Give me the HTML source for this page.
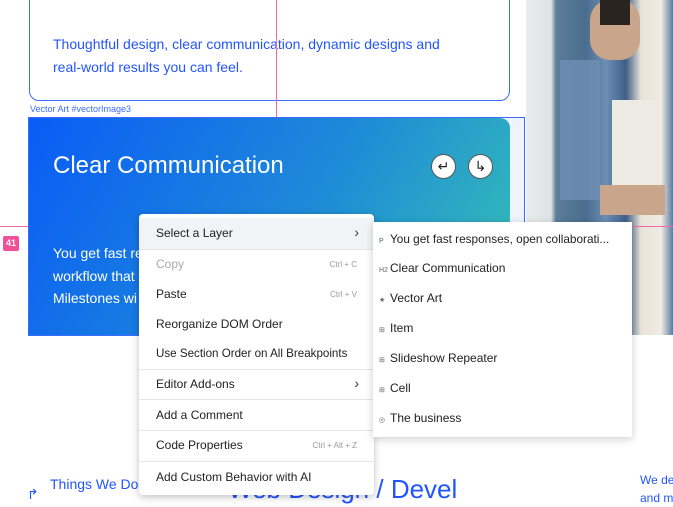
<!DOCTYPE html>
<html><head><style>
*{margin:0;padding:0;box-sizing:border-box}
body{width:673px;height:500px;overflow:hidden;background:#fff;position:relative;font-family:"Liberation Sans",sans-serif}
.a{position:absolute}
.mi{position:absolute;left:17px;font-size:12px;color:#222;white-space:nowrap}
.sc{position:absolute;right:17px;font-size:8px;color:#999}
.sep{position:absolute;left:0;right:0;height:1px;background:#e6e6e6}
.si{position:absolute;left:6px;font-size:12px;color:#222;white-space:nowrap}
.si i{font-style:normal;font-size:7px;color:#666;display:inline-block;width:11px}
</style></head><body>
<!-- photo -->
<div class="a" style="left:526px;top:0;width:147px;height:335px;background:linear-gradient(90deg,#e9ecec 0,#dfe3e3 25px,#5c7d9a 30px,#4a6e8e 60px,#6c8fb5 80px,#3f5f88 100px,#e8e3d8 115px,#f0ece4 135px,#5a7aa0 147px)"></div>
<div class="a" style="left:590px;top:0;width:50px;height:60px;background:#c9a58c;border-radius:20px"></div>
<div class="a" style="left:600px;top:0;width:30px;height:25px;background:#2a2420"></div>
<div class="a" style="left:612px;top:100px;width:48px;height:85px;background:#eeebe4"></div>
<div class="a" style="left:600px;top:185px;width:65px;height:30px;background:#c9a58c"></div>
<div class="a" style="left:560px;top:60px;width:40px;height:140px;background:#6f8fb5;opacity:.8"></div>
<!-- top card -->
<div class="a" style="left:29px;top:-10px;width:481px;height:111px;border:1.5px solid #3b6bff;border-radius:10px"></div>
<div class="a" style="left:53px;top:33px;font-size:14px;color:#2255ff;line-height:23px">Thoughtful design, clear communication, dynamic designs and<br>real-world results you can feel.</div>
<div class="a" style="left:276px;top:0;width:1px;height:117px;background:#f06aa8"></div>
<div class="a" style="left:30px;top:104px;font-size:9px;color:#3b6bff">Vector Art #vectorImage3</div>
<!-- gradient card -->
<div class="a" style="left:28px;top:117px;width:497px;height:219px;border:1px solid #3b6bff;background:#eef3ff"></div>
<div class="a" style="left:29px;top:118px;width:481px;height:217px;background:linear-gradient(120deg,#0a5cf6 0%,#1e8ad8 55%,#36c2b4 100%);border-radius:0 10px 0 0"></div>
<div class="a" style="left:53px;top:152px;font-size:24px;color:#fff">Clear Communication</div>
<div class="a" style="left:431px;top:154px;width:25px;height:25px;border-radius:50%;background:#fff;border:1px solid #555;text-align:center;font-size:14px;line-height:23px;color:#222">↵</div>
<div class="a" style="left:468px;top:154px;width:25px;height:25px;border-radius:50%;background:#fff;border:1px solid #555;text-align:center;font-size:14px;line-height:23px;color:#222">↳</div>
<div class="a" style="left:53px;top:242px;font-size:14px;color:#fff;line-height:22.5px">You get fast re<br>workflow that<br>Milestones wi</div>
<div class="a" style="left:0;top:226px;width:28px;height:1px;background:#f06aa8"></div>
<div class="a" style="left:631px;top:226px;width:42px;height:1px;background:#f06aa8"></div>
<div class="a" style="left:3px;top:236px;width:16px;height:15px;background:#f0509a;border-radius:2px;color:#fff;font-size:9px;text-align:center;line-height:15px;font-weight:bold">41</div>
<!-- bottom -->
<div class="a" style="left:50px;top:476px;font-size:14px;color:#2255ff;white-space:nowrap">Things We Do</div>
<div class="a" style="left:27px;top:486px;font-size:14px;color:#2255ff">↱</div>
<div class="a" style="left:228px;top:474px;font-size:26px;color:#2255ff;white-space:nowrap">Web Design / Devel</div>
<div class="a" style="left:640px;top:471px;font-size:12px;color:#2255ff;line-height:18px;white-space:nowrap">We de<br>and m</div>
<!-- menu -->
<div class="a" style="left:139px;top:214px;width:235px;height:281px;background:#fff;border-radius:4px;box-shadow:0 2px 8px rgba(0,0,0,.25)">
<div class="a" style="left:0;top:4px;width:235px;height:31px;background:#f2f3f6"></div>
<div class="mi" style="top:12px">Select a Layer</div><div class="a" style="right:15px;top:10px;font-size:14px;color:#333">›</div>
<div class="sep" style="top:35px"></div>
<div class="mi" style="top:43px;color:#aaa">Copy</div><div class="sc" style="top:46px">Ctrl + C</div>
<div class="mi" style="top:73px">Paste</div><div class="sc" style="top:76px">Ctrl + V</div>
<div class="mi" style="top:103px">Reorganize DOM Order</div>
<div class="mi" style="top:133px;font-size:11.6px">Use Section Order on All Breakpoints</div>
<div class="sep" style="top:155px"></div>
<div class="mi" style="top:163px">Editor Add-ons</div><div class="a" style="right:15px;top:161px;font-size:14px;color:#333">›</div>
<div class="sep" style="top:185px"></div>
<div class="mi" style="top:194px">Add a Comment</div>
<div class="sep" style="top:216px"></div>
<div class="mi" style="top:224px">Code Properties</div><div class="sc" style="top:227px">Ctrl + Alt + Z</div>
<div class="sep" style="top:247px"></div>
<div class="mi" style="top:256px">Add Custom Behavior with AI</div>
</div>
<div class="a" style="left:373px;top:222px;width:259px;height:215px;background:#fff;box-shadow:0 2px 8px rgba(0,0,0,.2)">
<div class="si" style="top:10px;font-size:11.8px"><i>P</i>You get fast responses, open collaborati...</div>
<div class="si" style="top:39px"><i>H2</i>Clear Communication</div>
<div class="si" style="top:69px"><i>★</i>Vector Art</div>
<div class="si" style="top:99px"><i>⊞</i>Item</div>
<div class="si" style="top:129px"><i>⊞</i>Slideshow Repeater</div>
<div class="si" style="top:159px"><i>⊞</i>Cell</div>
<div class="si" style="top:189px"><i>◎</i>The business</div>
</div>
</body></html>
